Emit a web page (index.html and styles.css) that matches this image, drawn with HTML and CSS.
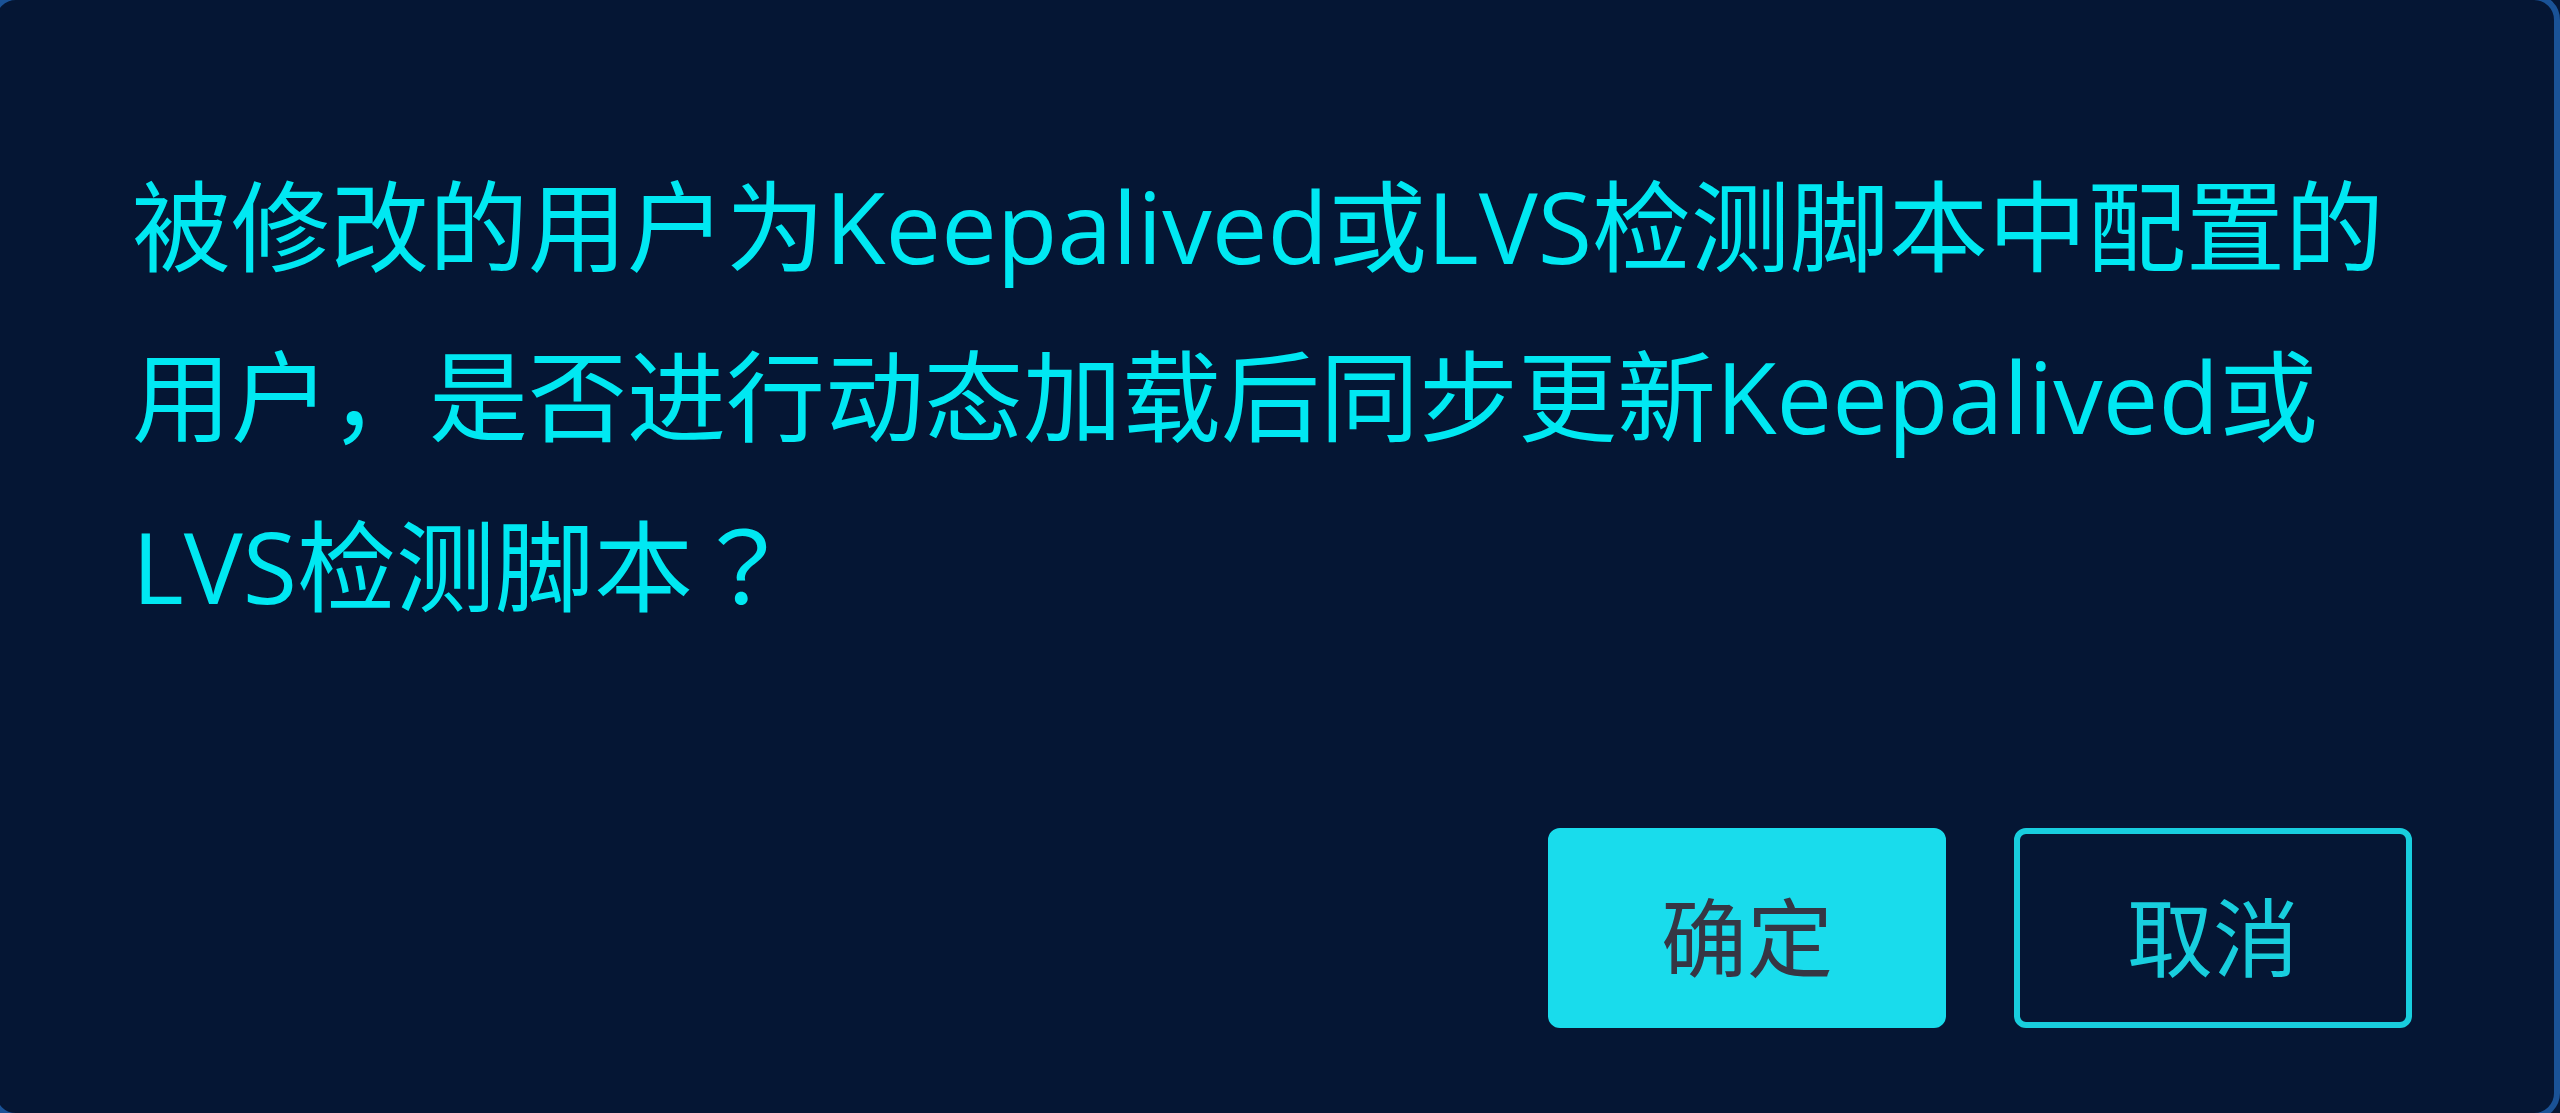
FILE: index.html
```html
<!DOCTYPE html>
<html lang="zh-CN">
<head>
<meta charset="utf-8">
<title>提示</title>
<link rel="stylesheet" href="styles.css">
</head>
<body>
<div class="dialog">
  <p class="message">被修改的用户为Keepalived或LVS检测脚本中配置的用户，是否进行动态加载后同步更新Keepalived或LVS检测脚本<span class="punct" lang="zh-TW">？</span></p>
  <div class="footer">
    <button class="btn btn-primary" type="button">确定</button>
    <button class="btn btn-ghost" type="button">取消</button>
  </div>
</div>
</body>
</html>
```

FILE: styles.css
```css
html, body {
  margin: 0;
  padding: 0;
  background: #051634;
  overflow: hidden;
}

.dialog {
  box-sizing: border-box;
  width: 2570px;
  height: 1125px;
  margin: -6px 0 0 -10px;
  border: 6px solid #1a5296;
  border-radius: 26px;
  background: #051634;
  padding: 141px 142px 0 136px;
}

.message {
  margin: 0;
  font-family: "Open Sans", "Noto Sans CJK SC", sans-serif;
  font-size: 99px;
  line-height: 170px;
  color: #00e8f2;
}

.punct {
  font-family: "Noto Sans CJK TC", sans-serif;
  line-height: 1;
}

.footer {
  display: flex;
  justify-content: flex-end;
  gap: 68px;
  margin-top: 177px;
}

.btn {
  box-sizing: border-box;
  width: 398px;
  height: 200px;
  padding: 12px 0 0 0;
  border-radius: 12px;
  font-family: "Noto Sans CJK SC", sans-serif;
  font-size: 86px;
  line-height: 1;
  display: flex;
  align-items: center;
  justify-content: center;
  cursor: pointer;
}

.btn-primary {
  background: #19dcec;
  border: 6px solid #19dcec;
  color: #363644;
}

.btn-ghost {
  background: transparent;
  border: 6px solid #18cede;
  color: #18cede;
}
```
